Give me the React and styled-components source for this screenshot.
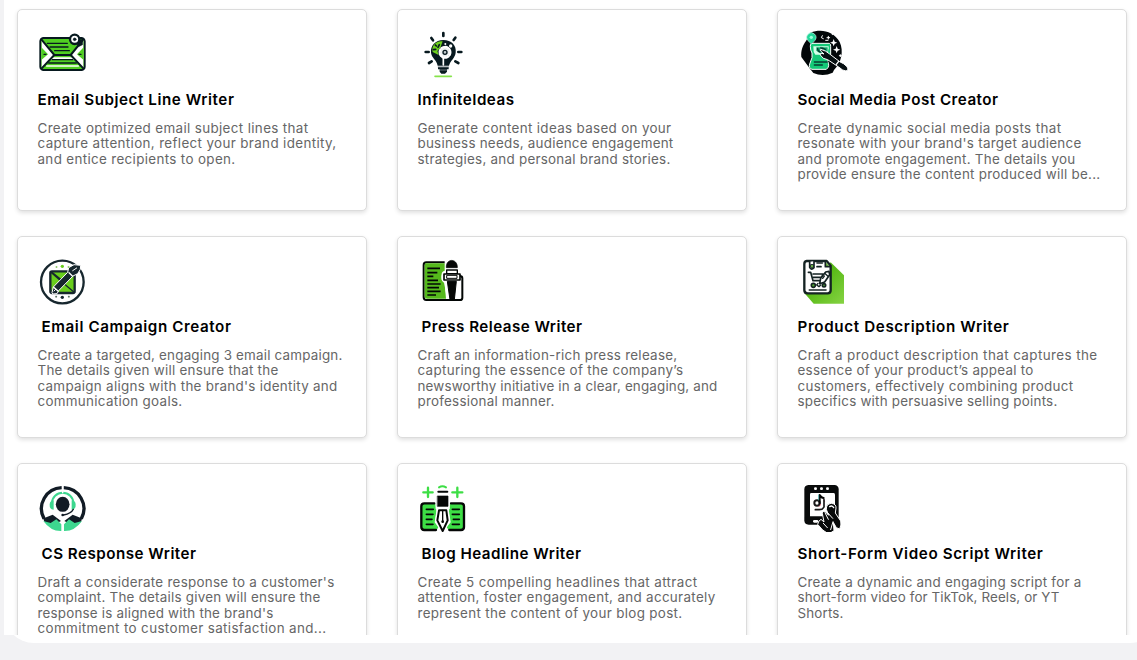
import React, { useLayoutEffect, useRef, useState } from "react";
import styled, { createGlobalStyle } from "styled-components";

const GlobalStyle = createGlobalStyle`
  * { box-sizing: border-box; }
  body {
    margin: 0;
    background: #f2f2f4;
    font-family: Inter, "Liberation Sans", sans-serif;
    overflow: hidden;
  }
`;

const Page = styled.div`
  height: 660px;
  width: 1137px;
  overflow: hidden;
  padding-left: 4px;
`;

const Panel = styled.main`
  width: 1156px;
  height: 643px;
  background: #fff;
  border-radius: 0 0 30px 30px;
`;

const ScrollArea = styled.section`
  height: 635px;
  overflow: hidden;
  background: #fff;
  padding: 9px 13px;
`;

const Grid = styled.div`
  display: grid;
  grid-template-columns: repeat(3, 350px);
  grid-auto-rows: 202px;
  gap: 25px 30px;
`;

const Card = styled.article`
  border: 1px solid #dcdcdc;
  border-radius: 5px;
  background: #fff;
  box-shadow: 0 2px 4px rgba(0, 0, 0, 0.12);
  padding: 18px 20px 0 19.5px;
`;

const Icon = styled.svg`
  display: block;
  width: 50px;
  height: 50px;
  margin-left: 0.5px;
`;

const Title = styled.h3`
  margin: 11px 0 0;
  padding-left: ${(p) => (p.$indent ? 4 : 0)}px;
  font-size: 15.2px;
  font-weight: 600;
  line-height: 22px;
  color: #000;
`;

const Description = styled.p`
  margin: 10px 0 0;
  font-size: 13.4px;
  line-height: 15.4px;
  color: #666;
`;

const Line = styled.span`
  display: block;
  width: max-content;
  white-space: nowrap;
`;

/* Tracks a line of text out or in so that it fills the given measure. */
function FittedLine({ text, width }) {
  const ref = useRef(null);
  const [tracking, setTracking] = useState(0);
  useLayoutEffect(() => {
    const natural = ref.current.getBoundingClientRect().width;
    setTracking((width - natural) / text.length);
  }, [text, width]);
  return (
    <Line ref={ref} style={{ letterSpacing: `${tracking}px` }}>
      {text}
    </Line>
  );
}

const INK = "#07191f";

const EnvelopeIcon = () => (
  <Icon viewBox="24 12 150 150" fill="none" stroke={INK} strokeLinecap="round" strokeLinejoin="round">
    <rect x="31" y="42" width="133" height="96" rx="10" fill="#50cf22" strokeWidth="6" />
    <path d="M35 46L73 91L35 133ZM160 46L122 91L160 133Z" fill="#fff" stroke="none" />
    <path d="M34 70L54 91L34 108ZM161 70L141 91L161 108Z" fill="#50cf22" stroke="none" />
    <path d="M69 100H126L134 107H61Z" fill="#fff" stroke="none" />
    <path d="M50 126H145" stroke="#fff" strokeWidth="5" />
    <path d="M34 46L73 93H122L160 46M73 93L35 133M122 93L160 133" strokeWidth="6" />
    <path d="M52 58H112M60 69H114M74 80H118M67 107H128M56 117H139M42 91H48M147 91H153" strokeWidth="4" />
    <path d="M134 50L158 45V62L146 68Z" fill={INK} />
    <circle cx="134" cy="46" r="14" fill="#fff" strokeWidth="7" />
    <circle cx="134" cy="46" r="4" fill={INK} strokeWidth="2" />
  </Icon>
);

const BulbIcon = () => (
  <Icon viewBox="24 12 150 150" fill="none" stroke={INK} strokeLinecap="round">
    <path d="M100 27V36M64 42L69 49M136 41L131 48M47 84H56M145 84H154M57 117L65 112M136 112L145 117" strokeWidth="8" />
    <path d="M100 48C76 48 61 65 63 86C65 102 79 106 83 125H117C121 110 135 102 137 86C140 64 124 48 100 48Z" fill={INK} stroke="none" />
    <path d="M68 84C63 66 78 49 98 52L91 71L82 81L86 93Z" fill="#6dcf1e" stroke="none" />
    <path d="M70 77L77 76M76 63L79 66M88 62L84 70" strokeWidth="5" />
    <circle cx="105" cy="85" r="16" stroke="#fff" strokeWidth="7" strokeDasharray="8 4.5" />
    <circle cx="105" cy="85" r="13" fill="#e9eff0" stroke="#fff" strokeWidth="3" />
    <circle cx="105" cy="85" r="6" fill="#c3ccd0" strokeWidth="4" />
    <circle cx="106" cy="60" r="3" fill="#fff" stroke="none" />
    <circle cx="122" cy="66" r="5" fill="#fff" stroke="none" />
    <path d="M100 101V123" stroke="#fff" strokeWidth="5" />
    <path d="M84 128H116V136H111V143L105 149H94L89 143V136H84Z" fill={INK} stroke="none" />
    <path d="M84 129H116M89 138H111" stroke="#9aa5a9" strokeWidth="2" />
    <path d="M75 157H124" stroke="#86e34b" strokeWidth="5" />
  </Icon>
);

const SocialPostIcon = () => (
  <Icon viewBox="24 12 150 150" fill="none" strokeLinecap="round" strokeLinejoin="round">
    <path d="M62 26C91 14 130 20 149 54C162 82 154 116 132 138L128 146Q99 160 70 147L60 134L34 99C32 79 39 63 48 51Z" fill="#020709" />
    <path d="M64 58H118Q123 60 122 67V91L113 112Q121 127 109 136H66Q55 132 59 120L66 101V87Q61 79 61 68Q60 61 64 58Z" fill="#15c978" stroke="#fff" strokeWidth="3" />
    <path d="M70 67H116V73L112 92H76L71 84Z" fill="#d5ffe9" />
    <path d="M79 70H113V82Q94 94 79 80Z" fill="#14ac6c" />
    <path d="M83 73Q82 81 91 84M93 70V79Q98 77 98 72L106 76" stroke="#073b32" strokeWidth="4" />
    <path d="M73 114H112M73 123H97" stroke="#063d30" strokeWidth="4" />
    <path d="M64 60L53 49A14 14 0 1 1 75 49Z" fill="#23d799" stroke="#fff" strokeWidth="1.5" />
    <circle cx="64" cy="40" r="5" fill="#9dffda" />
    <path d="M93 76Q108 80 119 90L149 113Q162 118 171 128Q177 138 168 141Q159 141 146 129L113 107L100 103L90 92Q95 85 102 90L93 82Z" fill="#071012" stroke="#fff" strokeWidth="3" />
    <path d="M146 112L139 121" stroke="#fff" strokeWidth="4" />
    <path d="M131 45L134 53L142 56L134 59L131 67L128 59L120 56L128 53ZM140 66L143 74L151 77L143 80L140 88L137 80L129 77L137 74Z" fill="#fff" />
    <path d="M97 35L94 41L100 44M115 37V45M111 41H119M151 92V98M148 95H154M107 49H114M127 29V32" stroke="#fff" strokeWidth="3" />
  </Icon>
);

const CampaignIcon = () => (
  <Icon viewBox="24 9 150 150" fill="none" stroke="#17272e" strokeLinecap="round" strokeLinejoin="round">
    <circle cx="97" cy="90" r="64" fill="#fff" strokeWidth="7" />
    <rect x="61" y="58" width="73" height="65" rx="5" fill="#69ce1d" strokeWidth="7" />
    <path d="M62 60L97 91L134 122M63 120L100 84M65 60L92 82Q97 85 105 79" strokeWidth="4" />
    <path d="M80 125L68 126L66 122L70 105L113 61L116 47L132 38L152 40L151 52L143 65L129 72L87 115Z" fill="#17272e" stroke="#fff" strokeWidth="3" />
    <path d="M117 62L127 72M71 106L84 117" stroke="#fff" strokeWidth="4" />
    <path d="M128 56L140 48M72 117L77 112" stroke="#fff" strokeWidth="3" />
    <circle cx="97" cy="43" r="5" fill="#69ce1d" stroke="none" />
    <circle cx="97" cy="136" r="5" fill="#17272e" stroke="none" />
    <path d="M79 45H80M115 45H116" stroke="#70ba3e" strokeWidth="5" />
    <path d="M78 134H79M116 134H117" stroke="#5d7466" strokeWidth="5" />
  </Icon>
);

const PressIcon = () => (
  <Icon viewBox="24 9 150 150" fill="none" stroke="#020604" strokeLinejoin="round">
    <path d="M104 31H49Q41 31 41 39V136Q41 144 49 144H150Q157 144 157 137V79Q157 72 149 72" strokeWidth="6" />
    <path d="M47 34H104V56Q95 58 95 66V84L104 94L108 140H50Q44 139 44 133V40Q44 35 47 34Z" fill="#55b91c" stroke="none" />
    <path d="M52 49H90M52 62H82M52 73H70M52 85H84M52 96H92M52 107H87M52 118H92M52 129H78" strokeWidth="5" />
    <path d="M106 64Q97 64 97 75Q97 88 106 90" stroke="#fff" strokeWidth="6" />
    <path d="M109 47C107 18 143 18 142 47Z" fill="#050706" strokeWidth="2" />
    <path d="M110 54H142V65H110Z" fill="#fff" strokeWidth="4" />
    <path d="M102 66H150V84H102Z" fill="#fff" strokeWidth="5" />
    <path d="M110 70H141V79H110Z" fill="#fff" strokeWidth="3" />
    <path d="M112 88H139L133 143H120Z" fill="#050706" strokeWidth="3" />
    <path d="M105 92L113 139" stroke="#fff" strokeWidth="5" />
  </Icon>
);

const ProductIcon = () => (
  <Icon viewBox="24 9 150 150" fill="none" stroke="#142323" strokeLinecap="round" strokeLinejoin="round">
    <defs>
      <linearGradient id="fold" x1="0" y1="0" x2="1" y2="1">
        <stop offset="0.4" stopColor="#55b814" />
        <stop offset="1" stopColor="#86d343" />
      </linearGradient>
    </defs>
    <path d="M122 31L162 70V155H71L43 123Z" fill="url(#fold)" stroke="none" />
    <path d="M50 27H110L122 41V115Q122 124 113 124H53Q43 124 43 115V36Q43 28 50 27Z" fill="#fff" strokeWidth="7" />
    <path d="M106 29V44H120" fill="#70bd43" strokeWidth="5" />
    <path d="M59 29V46Q64 56 72 47V28" fill="#fff" strokeWidth="5" />
    <path d="M62 39V46Q66 51 70 46V39Z" fill="#80cf54" strokeWidth="3" />
    <path d="M81 33H97M81 44H93M55 61H62L69 86H92L99 66H69M70 76H94M58 114H108" strokeWidth="5" />
    <circle cx="70" cy="100" r="6" fill="#52a833" strokeWidth="5" />
    <circle cx="102" cy="100" r="5" fill="#52a833" strokeWidth="5" />
    <path d="M89 95L92 79L107 60L117 58L119 68L104 90Z" fill="#fff" strokeWidth="5" />
    <path d="M104 64L114 73M98 79L103 72M84 94L80 99L87 104L92 99" strokeWidth="4" />
  </Icon>
);

const SupportIcon = () => (
  <Icon viewBox="24 9 150 150" fill="none" strokeLinecap="round" strokeLinejoin="round">
    <path d="M95 26A63 63 0 0 0 42 119M101 26A63 63 0 0 1 154 119" stroke="#111b25" strokeWidth="10" strokeLinecap="butt" />
    <path d="M37 111L45 116L68 107L93 126L75 135Q57 140 43 128ZM159 111L151 116L128 107L103 126L121 135Q139 140 153 128Z" fill="#111b25" />
    <path d="M40 126L62 132L79 121L94 136V156Q62 157 40 126ZM156 126L134 132L117 121L102 136V156Q134 157 156 126Z" fill="#3dd78f" />
    <path d="M66 72A32 31 0 0 1 130 72" stroke="#3dd78f" strokeWidth="6" />
    <path d="M71 64V92Q58 92 59 76Q60 65 71 64ZM125 64V92Q138 92 137 76Q136 65 125 64Z" fill="#3dd78f" />
    <circle cx="98" cy="77" r="25" fill="#fff" />
    <ellipse cx="98" cy="76" rx="20.5" ry="22.5" fill="#111b25" />
    <path d="M130 91Q124 104 101 108" stroke="#111b25" strokeWidth="4" />
    <circle cx="98" cy="108" r="4" fill="#111b25" />
    <path d="M98 19V41M98 117V159" stroke="#fff" strokeWidth="4" />
  </Icon>
);

const HeadlineIcon = () => (
  <Icon viewBox="24 9 150 150" fill="none" stroke="#050706" strokeLinecap="round" strokeLinejoin="round">
    <path d="M76 73H43Q34 75 34 84V142Q34 152 43 153H80L85 145L74 130L79 97ZM120 73H153Q163 75 163 84V142Q163 152 153 153H116L110 145L122 130L117 97Z" fill="#3dde45" stroke="none" />
    <path d="M73 73H43Q34 73 34 82V144Q34 153 43 153H78M123 73H153Q162 73 162 82V144Q162 153 153 153H118" strokeWidth="7" />
    <path d="M49 91H70M49 106H69M49 121H66M49 136H69M127 91H148M127 106H148M130 121H148M127 136H148" strokeWidth="5" />
    <path d="M98 40V90" stroke="#fff" strokeWidth="42" strokeLinecap="butt" />
    <path d="M83 51H114V82H83Z" fill="#050706" strokeWidth="2" />
    <path d="M85 38H112" strokeWidth="6" />
    <path d="M87 25Q97 19 108 25" stroke="#3dde45" strokeWidth="6" />
    <path d="M87 94H109L113 124L98 156L82 124Z" fill="#fff" stroke="#fff" strokeWidth="13" />
    <path d="M87 94H109L113 124L98 156L82 124Z" fill="#fff" strokeWidth="6" />
    <path d="M98 94V128" strokeWidth="4" />
    <circle cx="98" cy="128" r="4" fill="#050706" stroke="none" />
    <path d="M40 40H68M54 26V54M127 40H157M142 26V54" stroke="#3dde45" strokeWidth="7" />
  </Icon>
);

const VideoIcon = () => (
  <Icon viewBox="24 9 150 150" fill="none" strokeLinecap="round" strokeLinejoin="round">
    <path d="M55 18H135Q146 20 146 31V112L135 137H56Q43 137 43 124V31Q43 19 55 18Z" fill="#090b0b" />
    <path d="M64 42H131Q135 42 135 47V112H60V46Q60 42 64 42Z" fill="#fff" />
    <path d="M76 29H77M94 29H95M112 29H113" stroke="#fff" strokeWidth="8" />
    <circle cx="81" cy="72" r="8" stroke="#191919" strokeWidth="6" />
    <path d="M89 73V48Q94 57 101 57" stroke="#050505" strokeWidth="6" />
    <path d="M86 48V63" stroke="#3bbeb9" strokeWidth="2" />
    <path d="M101 62L104 68M87 83Q91 80 92 76" stroke="#e84c61" strokeWidth="2" />
    <path d="M76 92H88Q98 92 102 84V62" stroke="#171717" strokeWidth="5" />
    <path d="M109 90Q108 75 124 73Q139 75 138 87L136 102L152 126Q155 138 149 150L139 146L130 130L132 155L116 165L98 153L83 136Q85 125 93 121L102 129L97 103Q98 94 107 99L115 108Z" fill="#080a0a" stroke="#fff" strokeWidth="3" />
    <path d="M105 101L115 121M112 100L128 118M122 152L129 128M100 133L112 146" stroke="#fff" strokeWidth="3" />
    <path d="M119 83Q127 78 131 86" stroke="#fff" strokeWidth="4" />
    <path d="M73 127H81" stroke="#fff" strokeWidth="8" />
  </Icon>
);

const tools = [
  { icon: EnvelopeIcon, title: ["Email Subject Line Writer", 197], lines: [
    ["Create optimized email subject lines that", 271],
    ["capture attention, reflect your brand identity,", 299],
    ["and entice recipients to open.", 198]] },
  { icon: BulbIcon, title: ["InfiniteIdeas", 97], lines: [
    ["Generate content ideas based on your", 254],
    ["business needs, audience engagement", 256],
    ["strategies, and personal brand stories.", 253]] },
  { icon: SocialPostIcon, title: ["Social Media Post Creator", 201], lines: [
    ["Create dynamic social media posts that", 264],
    ["resonate with your brand's target audience", 284],
    ["and promote engagement. The details you", 278],
    ["provide ensure the content produced will be...", 303]] },
  { icon: CampaignIcon, indent: true, title: ["Email Campaign Creator", 190], lines: [
    ["Create a targeted, engaging 3 email campaign.", 305],
    ["The details given will ensure that the", 241],
    ["campaign aligns with the brand's identity and", 300],
    ["communication goals.", 145]] },
  { icon: PressIcon, indent: true, title: ["Press Release Writer", 161], lines: [
    ["Craft an information-rich press release,", 260],
    ["capturing the essence of the company’s", 266],
    ["newsworthy initiative in a clear, engaging, and", 300],
    ["professional manner.", 137]] },
  { icon: ProductIcon, title: ["Product Description Writer", 212], lines: [
    ["Craft a product description that captures the", 300],
    ["essence of your product’s appeal to", 236],
    ["customers, effectively combining product", 276],
    ["specifics with persuasive selling points.", 260]] },
  { icon: SupportIcon, indent: true, title: ["CS Response Writer", 155], lines: [
    ["Draft a considerate response to a customer's", 297],
    ["complaint. The details given will ensure the", 283],
    ["response is aligned with the brand's", 236],
    ["commitment to customer satisfaction and...", 289]] },
  { icon: HeadlineIcon, indent: true, title: ["Blog Headline Writer", 160], lines: [
    ["Create 5 compelling headlines that attract", 280],
    ["attention, foster engagement, and accurately", 298],
    ["represent the content of your blog post.", 265]] },
  { icon: VideoIcon, title: ["Short-Form Video Script Writer", 246], lines: [
    ["Create a dynamic and engaging script for a", 284],
    ["short-form video for TikTok, Reels, or YT", 262],
    ["Shorts.", 46]] },
];

function ToolCard({ tool }) {
  const Drawing = tool.icon;
  return (
    <Card>
      <Drawing />
      <Title $indent={tool.indent}>
        <FittedLine text={tool.title[0]} width={tool.title[1]} />
      </Title>
      <Description>
        {tool.lines.map(([text, width]) => (
          <FittedLine key={text} text={text} width={width} />
        ))}
      </Description>
    </Card>
  );
}

export default function App() {
  return (
    <Page>
      <GlobalStyle />
      <Panel>
        <ScrollArea>
          <Grid>
            {tools.map((tool) => (
              <ToolCard key={tool.title[0]} tool={tool} />
            ))}
          </Grid>
        </ScrollArea>
      </Panel>
    </Page>
  );
}
